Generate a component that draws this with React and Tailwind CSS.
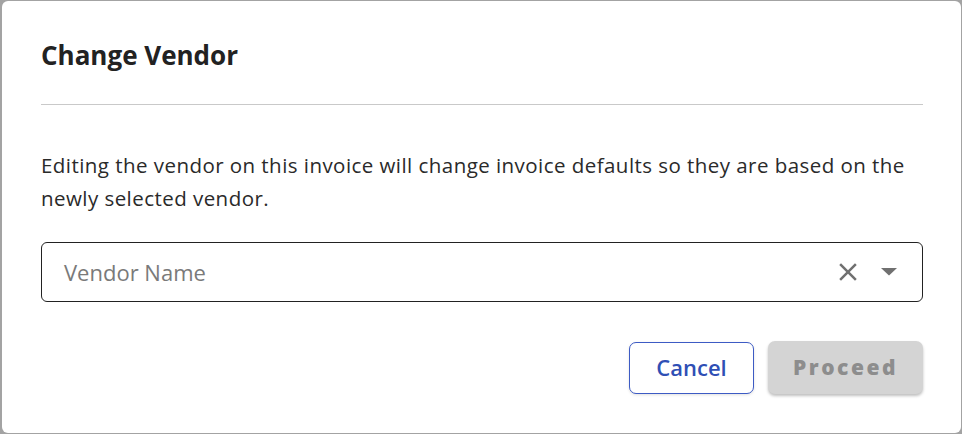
export default function App() {
  return (
    <div className="w-[962px] h-[434px] bg-[#a3a3a3] pl-[2px] pt-[1px] pr-[1px] pb-[1px] font-['Open_Sans','Lato',sans-serif]">
      <div className="h-full bg-white rounded-[6px] pl-[39px] pr-[38px] pt-[38px]">
        <h2 className="text-[26px] leading-[32px] font-bold text-[#222]">Change Vendor</h2>
        <div className="mt-[33px] h-px bg-[#c9c9c9]" />
        <p className="mt-[44px] text-[20.5px] leading-[33px] text-[#2a2a2a] tracking-[0.45px]">
          Editing the vendor on this invoice will change invoice defaults so they are based on the newly selected vendor.
        </p>
        <div className="mt-[27px] h-[60px] border border-[#222] rounded-[6px] flex items-center pl-[22px] pr-[25px]">
          <span className="flex-1 text-[22px] text-[#7a7a7a]">Vendor Name</span>
          <svg width="30" height="30" viewBox="0 0 24 24">
            <path
              d="M19 6.41 17.59 5 12 10.59 6.41 5 5 6.41 10.59 12 5 17.59 6.41 19 12 13.41 17.59 19 19 17.59 13.41 12z"
              fill="#707070"
            />
          </svg>
          <svg width="16" height="8" viewBox="0 0 16 8" className="ml-[18px]">
            <path d="M0 0h16L8 7.5z" fill="#707070" />
          </svg>
        </div>
        <div className="mt-[39px] flex justify-end items-center gap-[14px]">
          <button className="w-[125px] h-[52px] rounded-[7px] border border-[#3d5bc4] bg-white text-[#2f4fb5] text-[22px] font-semibold shadow-[0_1px_3px_rgba(0,0,0,0.12)]">
            Cancel
          </button>
          <button className="w-[155px] h-[53px] rounded-[7px] bg-[#d4d4d4] text-[#8d8d8d] text-[21px] font-extrabold tracking-[2.5px] shadow-[0_2px_3px_rgba(0,0,0,0.25)]">
            Proceed
          </button>
        </div>
      </div>
    </div>
  );
}
